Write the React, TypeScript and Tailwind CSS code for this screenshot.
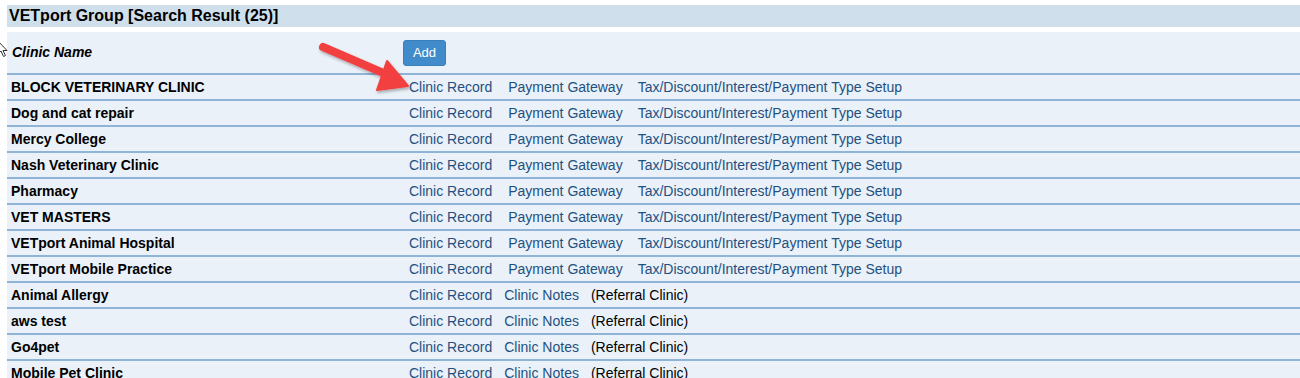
import { FC } from 'react';

type Clinic = {
    name: string;
    referral?: boolean;
};

const clinics: Clinic[] = [
    { name: 'BLOCK VETERINARY CLINIC' },
    { name: 'Dog and cat repair' },
    { name: 'Mercy College' },
    { name: 'Nash Veterinary Clinic' },
    { name: 'Pharmacy' },
    { name: 'VET MASTERS' },
    { name: 'VETport Animal Hospital' },
    { name: 'VETport Mobile Practice' },
    { name: 'Animal Allergy', referral: true },
    { name: 'aws test', referral: true },
    { name: 'Go4pet', referral: true },
    { name: 'Mobile Pet Clinic', referral: true },
];

const linkCls = 'text-[#1f5080] hover:underline cursor-pointer whitespace-nowrap';

const ClinicRow: FC<{ clinic: Clinic }> = ({ clinic }) => (
    <div className='flex items-center h-[26px] border-t-2 border-[#8fb4d6]'>
        <div className='w-[396px] pl-[4px] font-bold text-black'>{clinic.name}</div>
        <div className='flex items-center pl-[6px]'>
            <a className={linkCls}>Clinic Record</a>
            {clinic.referral ? (
                <>
                    <a className={`${linkCls} ml-[12px]`}>Clinic Notes</a>
                    <span className='ml-[12px] text-black whitespace-nowrap'>(Referral Clinic)</span>
                </>
            ) : (
                <>
                    <a className={`${linkCls} ml-[16px]`}>Payment Gateway</a>
                    <a className={`${linkCls} ml-[15px]`}>Tax/Discount/Interest/Payment Type Setup</a>
                </>
            )}
        </div>
    </div>
);

const App: FC = () => {
    return (
        <div className="relative h-[378px] overflow-hidden bg-white pl-[7px] pt-[5px] font-['Liberation_Sans',Arial,sans-serif] text-[14px]">
            {/* title bar */}
            <div className='h-[22px] flex items-center pl-[2px] bg-[#cfdfec] text-[16px] font-bold text-black'>
                VETport Group [Search Result (25)]
            </div>

            <div className='mt-[5px] bg-[#eaf1f9]'>
                <div className='flex items-center h-[41px]'>
                    <div className='w-[396px] pl-[5px] font-bold italic text-black'>Clinic Name</div>
                    <button className='h-[26px] w-[43px] rounded-[3px] bg-[#428bca] text-white text-[13px] border border-[#3a7fbd]'>Add</button>
                </div>
                {clinics.map((c) => (
                    <ClinicRow key={c.name} clinic={c} />
                ))}
            </div>

            {/* mouse pointer at the left edge */}
            <svg className='absolute left-[-3px] top-[40px]' width='12' height='18' viewBox='0 0 12 18'>
                <path d='M1 1 L1 14 L4 11 L6.5 16.5 L8.5 15.5 L6 10.5 L10 10.5 Z' fill='white' stroke='#333' strokeWidth='1' strokeLinejoin='round' />
            </svg>

            {/* red annotation arrow */}
            <svg className='absolute left-0 top-0 pointer-events-none' width='420' height='100' viewBox='0 0 420 100'>
                <defs>
                    <filter id='sh' x='-20%' y='-20%' width='140%' height='160%'>
                        <feDropShadow dx='1' dy='2' stdDeviation='1.5' floodColor='#000' floodOpacity='0.3' />
                    </filter>
                </defs>
                <g filter='url(#sh)' fill='#f2403f' stroke='#f2403f'>
                    <line x1='323' y1='47' x2='388' y2='75' strokeWidth='8' strokeLinecap='round' />
                    <polygon points='387,61 408,86 377,90' strokeWidth='2' strokeLinejoin='round' />
                </g>
            </svg>
        </div>
    );
};

export default App;
